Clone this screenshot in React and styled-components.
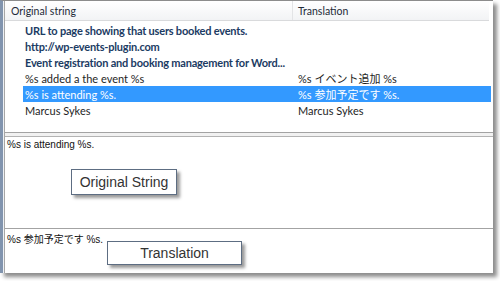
import React from "react";
import styled, { createGlobalStyle } from "styled-components";

const Global = createGlobalStyle`
  html, body { margin: 0; padding: 0; background: #fff; overflow: hidden; }
  #root { width: 500px; height: 281px; }
`;

const Frame = styled.div`
  position: relative;
  width: 489px;
  height: 272px;
  border-left: 3px solid #8194ae;
  border-top: 1px solid #8c8c8c;
  padding-left: 1px;
  background: #eef1f4;
  box-shadow: 4px 4px 4px rgba(0, 0, 0, 0.45);
`;

const Inner = styled.div`
  height: 100%;
  background: #fff;
  border-left: 1px solid #a6a6a6;
  display: flex;
  flex-direction: column;
  font-family: Lato, "Noto Sans CJK JP", sans-serif;
`;

const Header = styled.div`
  display: grid;
  grid-template-columns: 288px 1fr;
  height: 19px;
  background: linear-gradient(#ffffff, #f2f3f5);
  border-bottom: 1px solid #d9dadc;
  margin-right: 4px;
`;

const HeadCell = styled.div`
  display: flex;
  align-items: center;
  padding-left: ${(p) => p.$indent}px;
  font-size: 10.5px;
  color: #1e2a38;
  border-right: ${(p) => (p.$divider ? "1px solid #e3e4e6" : "none")};
`;

const List = styled.div`
  flex: 0 0 110px;
  padding: 1px 0 0 18px;
  border-bottom: 1px solid #a3a3a3;
`;

const Row = styled.div`
  display: grid;
  grid-template-columns: 270px 1fr;
  height: 16px;
  align-items: center;
  margin-right: 2px;
  background: ${(p) => (p.$selected ? "#3399ff" : "transparent")};
  color: ${(p) => (p.$selected ? "#fff" : p.$bold ? "#1b3b63" : "#1e1e1e")};
  font-weight: ${(p) => (p.$bold ? 700 : 400)};
  font-size: 11px;
  letter-spacing: ${(p) => (p.$bold ? "-0.2px" : "0")};
`;

const Cell = styled.div`
  padding-left: ${(p) => p.$indent}px;
  white-space: nowrap;
  overflow: visible;
`;

const Gap = styled.div`
  height: 3px;
  background: #f1f1f1;
  border-bottom: 1px solid #b3b3b3;
`;

const Editor = styled.div`
  flex: ${(p) => p.$grow};
  padding: 2px 0 0 2px;
  font-family: "Liberation Sans", "Noto Sans CJK JP", sans-serif;
  font-size: 10px;
  color: #111;
  border-bottom: ${(p) => (p.$line ? "1px solid #a3a3a3" : "none")};
`;

const Callout = styled.div`
  position: absolute;
  left: ${(p) => p.$x}px;
  top: ${(p) => p.$y}px;
  width: ${(p) => p.$w}px;
  height: ${(p) => p.$h}px;
  display: flex;
  align-items: center;
  justify-content: center;
  background: #fff;
  border: 1px solid #5d6d82;
  box-shadow: 3px 3px 3px rgba(0, 0, 0, 0.4);
  font-family: "Liberation Sans", sans-serif;
  font-size: 14px;
  color: #333;
  box-sizing: border-box;
`;

const rows = [
  { src: "URL to page showing that users booked events.", bold: true },
  { src: "http://wp-events-plugin.com", bold: true },
  { src: "Event registration and booking management for Word...", bold: true },
  { src: "%s added a the event %s", tr: "%s イベント追加 %s" },
  { src: "%s is attending %s.", tr: "%s 参加予定です %s.", selected: true },
  { src: "Marcus Sykes", tr: "Marcus Sykes" },
];

export default function App() {
  return (
    <>
      <Global />
      <Frame>
        <Inner>
          <Header>
            <HeadCell $indent={6} $divider>Original string</HeadCell>
            <HeadCell $indent={5}>Translation</HeadCell>
          </Header>
          <List>
            {rows.map((r) => (
              <Row key={r.src} $bold={r.bold} $selected={r.selected}>
                <Cell $indent={2}>{r.src}</Cell>
                <Cell $indent={5}>{r.tr}</Cell>
              </Row>
            ))}
          </List>
          <Gap />
          <Editor $grow="0 0 89px" $line>%s is attending %s.</Editor>
          <Editor $grow="1">%s 参加予定です %s.</Editor>
        </Inner>
        <Callout $x={68} $y={168} $w={106} $h={26}>Original String</Callout>
        <Callout $x={104} $y={240} $w={135} $h={24}>Translation</Callout>
      </Frame>
    </>
  );
}
